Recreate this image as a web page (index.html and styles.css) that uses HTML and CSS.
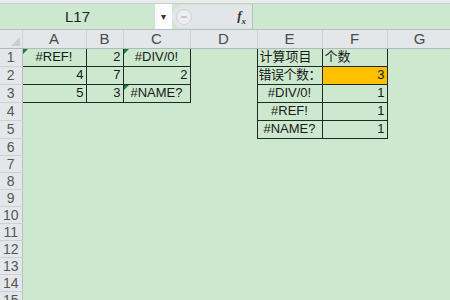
FILE: index.html
```html
<!DOCTYPE html>
<html>
<head>
<meta charset="UTF-8">
<title>Sheet</title>
<link rel="stylesheet" href="styles.css">
</head>
<body>
<div class="app">
  <div class="topline"></div>
  <div class="fbar">
    <div class="namebox">L17</div>
    <div class="drop">&#9662;</div>
    <div class="pill"><span class="knob"></span><span class="fx">f<sub>x</sub></span></div>
    <div class="finput"></div>
  </div>
  <table class="sheet">
    <colgroup>
      <col class="w-hdr"><col class="w-a"><col class="w-b"><col class="w-c">
      <col class="w-d"><col class="w-e"><col class="w-f"><col class="w-g">
    </colgroup>
    <tr class="hdr">
      <th class="corner"></th><th>A</th><th>B</th><th>C</th><th>D</th><th>E</th><th>F</th><th>G</th>
    </tr>
    <tr>
      <th>1</th><td class="b c err">#REF!</td><td class="b r">2</td><td class="b c err">#DIV/0!</td><td></td>
      <td class="b l">计算项目</td><td class="b l">个数</td><td></td>
    </tr>
    <tr>
      <th>2</th><td class="b r">4</td><td class="b r">7</td><td class="b r">2</td><td></td>
      <td class="b l tight">错误个数：</td><td class="b r hl">3</td><td></td>
    </tr>
    <tr>
      <th>3</th><td class="b r">5</td><td class="b r">3</td><td class="b c err">#NAME?</td><td></td>
      <td class="b c">#DIV/0!</td><td class="b r">1</td><td></td>
    </tr>
    <tr>
      <th>4</th><td></td><td></td><td></td><td></td>
      <td class="b c">#REF!</td><td class="b r">1</td><td></td>
    </tr>
    <tr>
      <th>5</th><td></td><td></td><td></td><td></td>
      <td class="b c">#NAME?</td><td class="b r">1</td><td></td>
    </tr>
    <tr><th>6</th><td></td><td></td><td></td><td></td><td></td><td></td><td></td></tr>
    <tr><th>7</th><td></td><td></td><td></td><td></td><td></td><td></td><td></td></tr>
    <tr><th>8</th><td></td><td></td><td></td><td></td><td></td><td></td><td></td></tr>
    <tr><th>9</th><td></td><td></td><td></td><td></td><td></td><td></td><td></td></tr>
    <tr><th>10</th><td></td><td></td><td></td><td></td><td></td><td></td><td></td></tr>
    <tr><th>11</th><td></td><td></td><td></td><td></td><td></td><td></td><td></td></tr>
    <tr><th>12</th><td></td><td></td><td></td><td></td><td></td><td></td><td></td></tr>
    <tr><th>13</th><td></td><td></td><td></td><td></td><td></td><td></td><td></td></tr>
    <tr><th>14</th><td></td><td></td><td></td><td></td><td></td><td></td><td></td></tr>
    <tr><th>15</th><td></td><td></td><td></td><td></td><td></td><td></td><td></td></tr>
  </table>
</div>
</body>
</html>
```

FILE: styles.css
```css
html, body
{
    margin: 0;
    padding: 0;
    background: #cce8cf;
    overflow: hidden;
}

.app
{
    width: 450px;
    height: 300px;
    overflow: hidden;
    font-family: "Liberation Sans", "Noto Sans CJK SC", sans-serif;
    color: #1a1a1a;
}

.topline
{
    height: 3px;
    background: #e9ebec;
    border-bottom: 1px solid #c9cdd0;
}

.fbar
{
    display: flex;
    height: 25px;
    background: #cce8cf;
    border-bottom: 1px solid #b9bec3;
}

.namebox
{
    width: 155px;
    text-align: center;
    line-height: 25px;
    font-size: 15px;
    color: #222;
}

.drop
{
    width: 17px;
    background: #fbfcfb;
    text-align: center;
    line-height: 25px;
    font-size: 10px;
    color: #333;
}

.pill
{
    width: 80px;
    margin: 1px 0;
    display: flex;
    align-items: center;
    justify-content: space-between;
    background: #e3e6e8;
    border-radius: 12px 0 0 12px;
    padding: 0 6px 0 4px;
    box-sizing: border-box;
}

.knob
{
    width: 14px;
    height: 14px;
    border-radius: 50%;
    border: 1px solid #cfd3d6;
    background: #eceef0;
    position: relative;
}

.knob::after
{
    content: "";
    position: absolute;
    left: 4px;
    top: 6px;
    width: 6px;
    height: 2px;
    background: #c3c7ca;
}

.fx
{
    font-family: "Liberation Serif", serif;
    font-style: italic;
    font-weight: bold;
    font-size: 13px;
    color: #333;
}

.fx sub
{
    font-size: 9px;
}

.finput
{
    flex: 1;
    border-left: 1px solid #b9bec3;
}

.sheet
{
    table-layout: fixed;
    width: 452px;
    border-collapse: collapse;
    font-size: 13px;
}

.w-hdr { width: 22px; }
.w-a { width: 64px; }
.w-b { width: 37px; }
.w-c { width: 67px; }
.w-d { width: 67px; }
.w-e { width: 65px; }
.w-f { width: 65px; }
.w-g { width: 65px; }

.sheet tr
{
    height: 17px;
}

.sheet td
{
    padding: 0 2px;
    height: 17px;
    line-height: 16px;
    white-space: nowrap;
    overflow: hidden;
    position: relative;
}

.sheet th
{
    padding: 0;
    font-weight: normal;
    background: #e4e7ea;
    color: #555;
    font-size: 14px;
    border-bottom: 1px solid #cdd1d5;
    border-right: 1px solid #b9bec3;
}

.sheet tr.hdr
{
    height: 18px;
}

.sheet tr.hdr th
{
    font-size: 15px;
    color: #4a4a4a;
    border-right: 1px solid #cdd1d5;
    border-bottom: 1px solid #b3b8bd;
}

.sheet th.corner
{
    position: relative;
}

.sheet th.corner::after
{
    content: "";
    position: absolute;
    right: 2px;
    bottom: 2px;
    border-left: 9px solid transparent;
    border-bottom: 9px solid #c9ccd0;
}

.sheet td.b
{
    border: 1px solid #1f2a22;
}

.sheet td.tight
{
    padding: 0 0 0 1px;
    letter-spacing: -0.5px;
}

.c { text-align: center; }
.r { text-align: right; }
.l { text-align: left; }

.hl
{
    background: #ffc000;
}

.err::before
{
    content: "";
    position: absolute;
    left: 0;
    top: 0;
    border-top: 5px solid #1d7a3a;
    border-right: 5px solid transparent;
}
```
